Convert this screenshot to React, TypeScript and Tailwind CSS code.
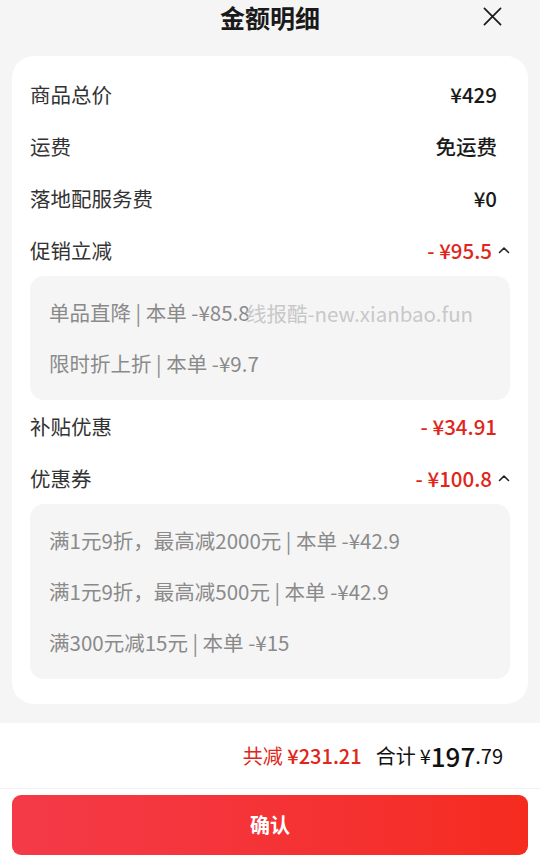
import React from 'react'

const RED = 'text-[#e0261b]'

function ChevronUp() {
  return (
    <svg viewBox="0 0 12 8" className="ml-[6px] h-[8px] w-[12px]" fill="none">
      <path d="M1.5 6.5 6 2l4.5 4.5" stroke="#222" strokeWidth="1.6" strokeLinecap="round" strokeLinejoin="round" />
    </svg>
  )
}

function Row({ label, value, red, open }: { label: string; value: string; red?: boolean; open?: boolean }) {
  return (
    <div className="flex h-[52px] items-center justify-between">
      <span className="text-[20.5px] text-[#333]">{label}</span>
      <span className={`flex items-center ${open ? '' : 'pr-[13px]'}`}>
        <span className={`text-[20.5px] font-medium ${red ? RED : 'text-[#1a1a1a]'}`}>{value}</span>
        {open && <ChevronUp />}
      </span>
    </div>
  )
}

function SubBox({ lines }: { lines: string[] }) {
  return (
    <div className="rounded-[14px] bg-[#f5f5f5] px-[19px] pt-[11px] pb-[11px]">
      {lines.map((l) => (
        <div key={l} className="flex h-[51px] items-center text-[20.5px] text-[#8a8a8a]">
          {l}
        </div>
      ))}
    </div>
  )
}

export default function App() {
  return (
    <div
      className="relative h-[867px] w-[540px] overflow-hidden bg-white"
      style={{ fontFamily: '"Noto Sans CJK SC", "Noto Sans", sans-serif' }}
    >
      <div className="bg-[#f5f5f5] px-[12px] pb-[19px]">
        <div className="relative flex h-[34px] items-center justify-center">
          <span className="text-[25px] font-bold leading-none text-[#1a1a1a]">金额明细</span>
          <svg viewBox="0 0 20 20" className="absolute right-[26px] top-[7px] h-[19px] w-[19px]" fill="none">
            <path d="M1.5 1.5l17 17M18.5 1.5l-17 17" stroke="#1a1a1a" strokeWidth="1.8" strokeLinecap="round" />
          </svg>
        </div>
        <div className="mt-[22px] rounded-[22px] bg-white px-[18px] pt-[12px] pb-[25px]">
          <Row label="商品总价" value="¥429" />
          <Row label="运费" value="免运费" />
          <Row label="落地配服务费" value="¥0" />
          <Row label="促销立减" value="- ¥95.5" red open />
          <div className="relative">
            <SubBox lines={['单品直降 | 本单 -¥85.8', '限时折上折 | 本单 -¥9.7']} />
            <span className="absolute left-[216px] top-[22px] text-[20.5px] text-[#c8c8c8]">线报酷-new.xianbao.fun</span>
          </div>
          <Row label="补贴优惠" value="- ¥34.91" red />
          <Row label="优惠券" value="- ¥100.8" red open />
          <SubBox
            lines={['满1元9折，最高减2000元 | 本单 -¥42.9', '满1元9折，最高减500元 | 本单 -¥42.9', '满300元减15元 | 本单 -¥15']}
          />
        </div>
      </div>
      <div className="flex h-[66px] items-center justify-end border-b border-[#f2f2f2] pr-[37px]">
        <span className={`text-[20px] ${RED}`}>共减 <span className="font-medium">¥231.21</span></span>
        <span className="ml-[14px] text-[20px] text-[#111]">合计</span>
        <span className="ml-[4px] text-[20px] text-[#111]">¥</span>
        <span className="text-[26px] font-medium leading-none text-[#111]">197</span>
        <span className="text-[20px] text-[#111]">.79</span>
      </div>
      <div className="px-[12px] pt-[6px]">
        <button className="flex h-[60px] w-full items-center justify-center rounded-[9px] bg-gradient-to-r from-[#f43a48] to-[#f52b1e] text-[20px] font-bold text-white">
          确认
        </button>
      </div>
    </div>
  )
}
